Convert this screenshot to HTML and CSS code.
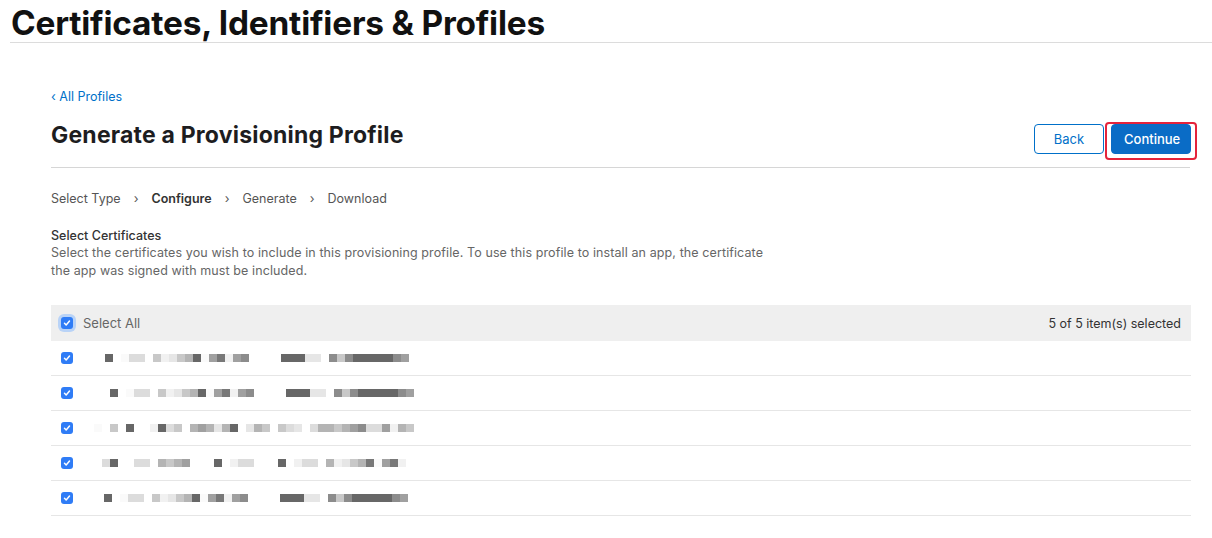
FILE: index.html
```html
<!DOCTYPE html>
<html lang="en">
<head>
    <meta charset="UTF-8">
    <meta name="viewport" content="width=device-width, initial-scale=1.0">
    <title>Certificates, Identifiers &amp; Profiles</title>
    <link rel="stylesheet" href="styles.css">
</head>
<body>
    <header class="top">
        <h1>Certificates, Identifiers &amp; Profiles</h1>
    </header>

    <main class="content">
        <a class="back-link" href="#">&lsaquo; All Profiles</a>

        <div class="title-row">
            <h2>Generate a Provisioning Profile</h2>
            <div class="actions">
                <button type="button" class="btn btn-outline">Back</button>
                <span class="highlight">
                    <button type="button" class="btn btn-primary">Continue</button>
                </span>
            </div>
        </div>

        <nav class="steps">
            <span>Select Type</span>
            <span class="sep">&rsaquo;</span>
            <span class="current">Configure</span>
            <span class="sep">&rsaquo;</span>
            <span>Generate</span>
            <span class="sep">&rsaquo;</span>
            <span>Download</span>
        </nav>

        <section class="intro">
            <h3>Select Certificates</h3>
            <p>Select the certificates you wish to include in this provisioning profile. To use this profile to install an app, the certificate the app was signed with must be included.</p>
        </section>

        <div class="list">
            <div class="list-head">
                <label class="check-label">
                    <span class="check focus"><svg viewBox="0 0 12 12"><path d="M3 6.3l2 2 4-4.6" /></svg></span>
                    Select All
                </label>
                <span class="count">5 of 5 item(s) selected</span>
            </div>
            <div id="rows"></div>
        </div>
    </main>

    <script>
        // redacted certificate names, one letter per 8px block
        const rows = [
            { left: 32, pattern: 'j.add.ebcefjagibgh....jjjcc.hehjjjjjhg' },
            { left: 37, pattern: 'j.add.ebcefjagibgh....jjjcc.hehjjjjjhg' },
            { left: 21, pattern: 'a.e.j..bjde.fgfcfj.cfe.edc.dffefghddgbfe' },
            { left: 29, pattern: 'dj..dd.fefg...j.bdd...j.bdd.fbcefiagib' },
            { left: 31, pattern: 'j.add.ebcefjagibgh....jjjcc.hehjjjjjhg' }
        ];
        const check = '<span class="check"><svg viewBox="0 0 12 12"><path d="M3 6.3l2 2 4-4.6" /></svg></span>';
        let html = '';
        for (const row of rows) {
            let blocks = '';
            for (const c of row.pattern) {
                blocks += c === '.' ? '<i class="px"></i>' : `<i class="px s-${c}"></i>`;
            }
            html += `<div class="row">${check}<span class="blur" style="margin-left: ${row.left}px">${blocks}</span></div>`;
        }
        document.getElementById('rows').innerHTML = html;
    </script>
</body>
</html>
```

FILE: styles.css
```css
body {
    font-family: Inter, "Noto Sans", Arial, sans-serif;
    background-color: #fff;
    color: #1d1d1f;
    margin: 0;
    padding: 0;
}
.top {
    padding: 0 0 0 10px;
}
.top h1 {
    margin: 0;
    padding: 4px 0 0 1px;
    height: 38px;
    font-size: 33.4px;
    font-weight: 700;
    letter-spacing: -0.2px;
    line-height: 38px;
    color: #111;
    border-bottom: 1px solid #dcdcdc;
}
.content {
    width: 1140px;
    margin-left: 51px;
    padding-top: 46px;
}
.back-link {
    display: block;
    font-size: 12.5px;
    line-height: 16px;
    color: #0070c9;
    text-decoration: none;
}
.title-row {
    display: flex;
    justify-content: space-between;
    align-items: flex-start;
    margin-top: 15px;
    margin-right: 1px;
    padding-bottom: 13px;
    border-bottom: 1px solid #d6d6d6;
}
.title-row h2 {
    margin: 0;
    font-size: 23px;
    font-weight: 700;
    line-height: 30px;
    letter-spacing: 0.2px;
    color: #1d1d1f;
}
.actions {
    display: flex;
    align-items: flex-start;
    padding-top: 4px;
}
.btn {
    height: 30px;
    padding: 0 12px;
    font-family: inherit;
    font-size: 13px;
    border-radius: 4px;
    cursor: pointer;
}
.btn-outline {
    width: 70px;
    background-color: #fff;
    color: #0070c9;
    border: 1px solid #0070c9;
}
.btn-primary {
    width: 80px;
    background-color: #0a6cc6;
    color: #fff;
    font-weight: 500;
    border: 1px solid #0a6cc6;
}
.highlight {
    display: flex;
    margin: -2px -7px -6px 1px;
    padding: 0 4px 4px 4px;
    border: 2px solid #e4233b;
    border-radius: 4px;
}
.steps {
    display: flex;
    gap: 13px;
    margin-top: 23px;
    font-size: 12.5px;
    line-height: 16px;
    color: #555;
}
.steps .current {
    font-weight: 600;
    color: #333;
}
.steps .sep {
    color: #555;
}
.intro {
    margin-top: 20px;
}
.intro h3 {
    margin: 0;
    font-size: 12.5px;
    font-weight: 500;
    line-height: 17px;
    color: #333;
}
.intro p {
    margin: 0;
    max-width: 720px;
    font-size: 12.5px;
    letter-spacing: 0.1px;
    line-height: 18px;
    color: #666;
}
.list {
    margin-top: 25px;
}
.list-head {
    display: flex;
    justify-content: space-between;
    align-items: center;
    height: 36px;
    padding: 0 10px;
    background-color: #efefef;
}
.check-label {
    display: flex;
    align-items: center;
    gap: 10px;
    font-size: 13px;
    color: #666;
}
.count {
    font-size: 12.5px;
    color: #333;
}
.check {
    display: inline-flex;
    align-items: center;
    justify-content: center;
    width: 12px;
    height: 12px;
    border-radius: 3px;
    background-color: #2f7cf6;
}
.check svg {
    width: 10px;
    height: 10px;
    fill: none;
    stroke: #fff;
    stroke-width: 1.8;
    stroke-linecap: round;
    stroke-linejoin: round;
}
.check.focus {
    box-shadow: 0 0 0 3px #b9d3f7;
}
.row {
    display: flex;
    align-items: center;
    height: 34px;
    padding-left: 10px;
    border-bottom: 1px solid #e6e6e6;
}
.blur {
    display: flex;
}
.px {
    display: block;
    width: 8px;
    height: 8px;
}
.s-a { background-color: #fafafa; }
.s-b { background-color: #f1f1f1; }
.s-c { background-color: #e6e6e6; }
.s-d { background-color: #dcdcdc; }
.s-e { background-color: #c8c8c8; }
.s-f { background-color: #b4b4b4; }
.s-g { background-color: #a0a0a0; }
.s-h { background-color: #8c8c8c; }
.s-i { background-color: #787878; }
.s-j { background-color: #676767; }
```
